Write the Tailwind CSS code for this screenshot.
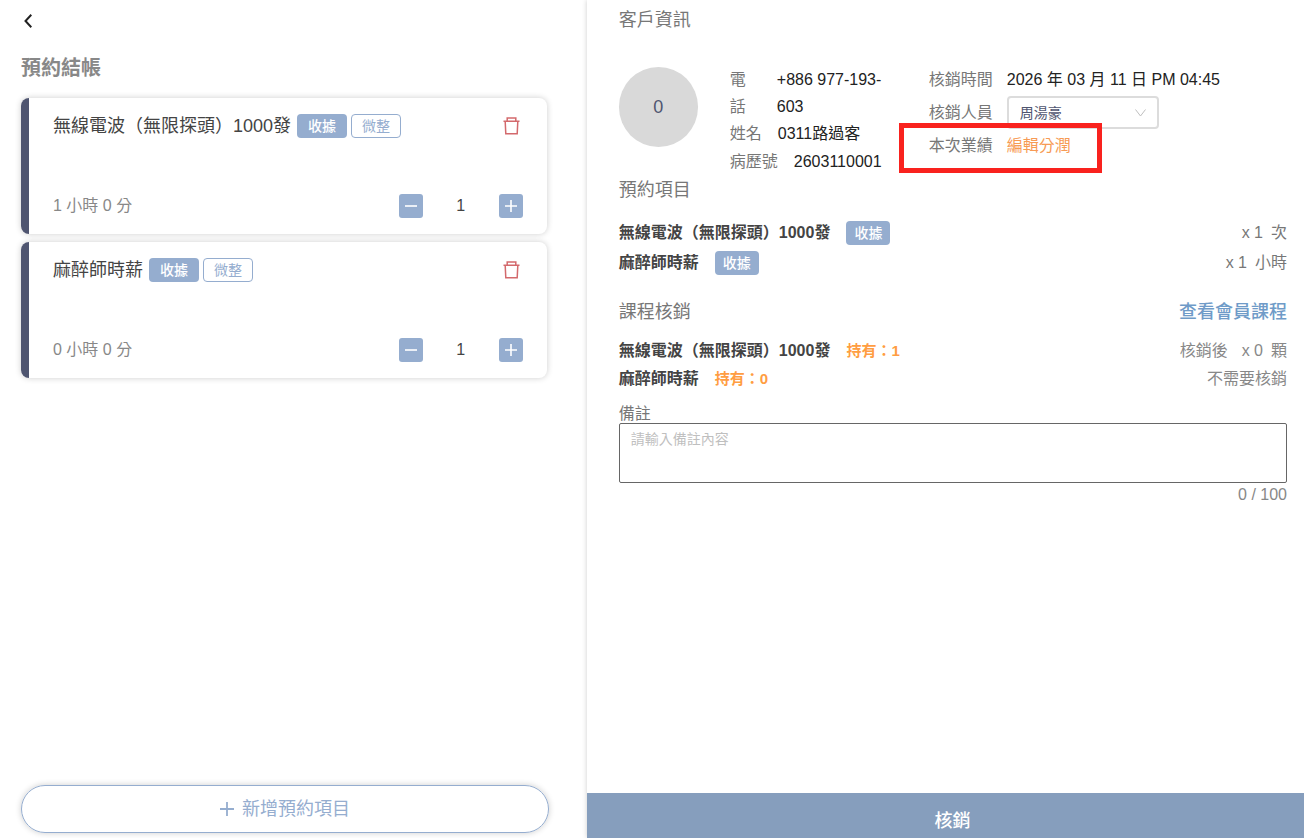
<!DOCTYPE html>
<html lang="zh-Hant">
<head>
<meta charset="utf-8">
<meta name="viewport" content="width=device-width, initial-scale=1">
<title>預約結帳</title>
<script src="https://cdn.jsdelivr.net/npm/@tailwindcss/browser@4"></script>
</head>
<body class="flex h-screen overflow-hidden bg-white font-['Liberation_Sans','Noto_Sans_CJK_TC',sans-serif] text-[#444]">
  <main class="flex w-[45%] shrink-0 flex-col pr-[38px] pl-[21px]">
    <header class="flex flex-col items-start pt-[9px]">
      <button type="button" aria-label="返回" class="flex h-6 items-center pl-[3px] text-[#222]">
        <svg width="8" height="14" viewBox="0 0 8 14" fill="none" stroke="currentColor" stroke-width="2"><path d="M7.3.8 1.5 7l5.8 6.2"/></svg>
      </button>
      <h1 class="mt-[21px] text-xl leading-7 font-bold text-[#888]">預約結帳</h1>
    </header>
    <ul class="mt-4 mr-[2px] flex grow flex-col gap-2">
      <li class="flex flex-col justify-between gap-14 rounded-lg border-l-8 border-[#4f5570] px-6 py-4 shadow-[0_0_6px_rgba(0,0,0,0.2)]">
        <div class="flex h-6 items-center gap-1">
          <h2 class="mr-[2px] text-lg leading-6">無線電波（無限探頭）1000發</h2>
          <span class="flex h-6 items-center rounded bg-[#95adcf] px-[11px] text-sm font-medium text-white">收據</span>
          <span class="flex h-6 items-center rounded border border-[#95adcf] px-[10px] text-sm text-[#95adcf]">微整</span>
          <button type="button" aria-label="刪除" class="ml-auto text-[#d3696c]">
            <svg width="24" height="24" viewBox="0 0 24 24" fill="none" stroke="currentColor" stroke-width="1.5"><path d="M4.5 7.2h16M8.2 7V4h8.6v3M6.2 7.5l.6 12.3h11.4l.6-12.3"/></svg>
          </button>
        </div>
        <div class="flex h-6 items-center">
          <p class="text-base leading-6 text-[#888]">1 小時 0 分</p>
          <button type="button" aria-label="減少" class="ml-auto flex size-6 items-center justify-center rounded-[3px] bg-[#95adcf] text-white"><svg width="12" height="12" viewBox="0 0 12 12" stroke="currentColor" stroke-width="1.6"><path d="M0 6h12"/></svg></button>
          <span class="w-[76px] text-center text-base leading-6">1</span>
          <button type="button" aria-label="增加" class="flex size-6 items-center justify-center rounded-[3px] bg-[#95adcf] text-white"><svg width="12" height="12" viewBox="0 0 12 12" stroke="currentColor" stroke-width="1.6"><path d="M0 6h12M6 0v12"/></svg></button>
        </div>
      </li>
      <li class="flex flex-col justify-between gap-14 rounded-lg border-l-8 border-[#4f5570] px-6 py-4 shadow-[0_0_6px_rgba(0,0,0,0.2)]">
        <div class="flex h-6 items-center gap-1">
          <h2 class="mr-[2px] text-lg leading-6">麻醉師時薪</h2>
          <span class="flex h-6 items-center rounded bg-[#95adcf] px-[11px] text-sm font-medium text-white">收據</span>
          <span class="flex h-6 items-center rounded border border-[#95adcf] px-[10px] text-sm text-[#95adcf]">微整</span>
          <button type="button" aria-label="刪除" class="ml-auto text-[#d3696c]">
            <svg width="24" height="24" viewBox="0 0 24 24" fill="none" stroke="currentColor" stroke-width="1.5"><path d="M4.5 7.2h16M8.2 7V4h8.6v3M6.2 7.5l.6 12.3h11.4l.6-12.3"/></svg>
          </button>
        </div>
        <div class="flex h-6 items-center">
          <p class="text-base leading-6 text-[#888]">0 小時 0 分</p>
          <button type="button" aria-label="減少" class="ml-auto flex size-6 items-center justify-center rounded-[3px] bg-[#95adcf] text-white"><svg width="12" height="12" viewBox="0 0 12 12" stroke="currentColor" stroke-width="1.6"><path d="M0 6h12"/></svg></button>
          <span class="w-[76px] text-center text-base leading-6">1</span>
          <button type="button" aria-label="增加" class="flex size-6 items-center justify-center rounded-[3px] bg-[#95adcf] text-white"><svg width="12" height="12" viewBox="0 0 12 12" stroke="currentColor" stroke-width="1.6"><path d="M0 6h12M6 0v12"/></svg></button>
        </div>
      </li>
    </ul>
    <button type="button" class="mb-[5px] flex h-12 items-center justify-center gap-2 rounded-full border border-[#95adcf] text-lg text-[#95adcf] shadow-[0_0_6px_rgba(0,0,0,0.2)]">
      <svg width="14" height="14" viewBox="0 0 14 14" stroke="currentColor" stroke-width="1.8"><path d="M0 7h14M7 0v14"/></svg>新增預約項目
    </button>
  </main>

  <aside class="flex min-w-0 grow flex-col text-base text-[#777] shadow-[0_0_5px_rgba(0,0,0,0.2)]">
    <div class="grow pt-[6px] pr-[17px] pl-8">
      <h2 class="text-lg leading-7">客戶資訊</h2>
      <div class="mt-8 flex gap-8">
        <div class="mt-px flex h-20 w-[79px] shrink-0 items-center justify-center rounded-full bg-[#d9d9d9] text-lg text-[#4f5570]">0</div>
        <dl class="w-[167px] shrink-0 leading-[27px]">
          <div class="flex gap-4"><dt class="w-[31px] shrink-0">電話</dt><dd class="min-w-0 text-[#222]">+886 977-193-603</dd></div>
          <div class="flex gap-4"><dt>姓名</dt><dd class="text-[#222]">0311路過客</dd></div>
          <div class="mt-px flex gap-4"><dt>病歷號</dt><dd class="text-[#222]">2603110001</dd></div>
        </dl>
        <div class="flex flex-col leading-[27px]">
          <div class="flex gap-[14px]"><span>核銷時間</span><span class="text-[#222]">2026 年 03 月 11 日 PM 04:45</span></div>
          <div class="mt-[3px] flex items-center gap-[14px]">
            <label for="staff">核銷人員</label>
            <div class="relative w-[152px] rounded border-2 border-[#dcdcdc]">
              <select id="staff" class="block h-[29px] w-full appearance-none bg-transparent px-[11px] text-sm text-[#4f5570]"><option>周湯豪</option></select>
              <svg class="pointer-events-none absolute top-[11px] right-[11px] text-[#bfbfbf]" width="11" height="8" viewBox="0 0 11 8" fill="none" stroke="currentColor"><path d="m.5.5 5 6.5 5-6.5"/></svg>
            </div>
          </div>
          <div class="relative mt-[3px] flex gap-[14px]">
            <span>本次業績</span><a href="#" class="text-[#f79b55]">編輯分潤</a>
            <span class="pointer-events-none absolute -top-[9px] -left-[30px] h-[50px] w-[203px] border-[5px] border-[#f9221e]"></span>
          </div>
        </div>
      </div>

      <h2 class="mt-px text-lg leading-7">預約項目</h2>
      <ul class="mt-[17px] flex flex-col gap-[6px] leading-6">
        <li class="flex items-center"><strong class="text-[#444]">無線電波（無限探頭）1000發</strong><span class="ml-4 flex h-6 items-center rounded bg-[#95adcf] px-2 text-sm font-medium text-white">收據</span><span class="ml-auto">x 1</span><span class="ml-2">次</span></li>
        <li class="flex items-center"><strong class="text-[#444]">麻醉師時薪</strong><span class="ml-4 flex h-6 items-center rounded bg-[#95adcf] px-2 text-sm font-medium text-white">收據</span><span class="ml-auto">x 1</span><span class="ml-2">小時</span></li>
      </ul>

      <div class="mt-[23px] flex justify-between text-lg leading-7">
        <h2>課程核銷</h2><a href="#" class="font-medium text-[#6f9bc8]">查看會員課程</a>
      </div>
      <ul class="mt-[11px] leading-7 text-[#888]">
        <li class="flex"><strong class="text-[#444]">無線電波（無限探頭）1000發</strong><strong class="ml-4 text-[15px] leading-7 text-[#ff9d42]">持有：1</strong><span class="ml-auto">核銷後</span><span class="ml-[14px]">x 0</span><span class="ml-2">顆</span></li>
        <li class="flex"><strong class="text-[#444]">麻醉師時薪</strong><strong class="ml-4 text-[15px] leading-7 text-[#ff9d42]">持有：0</strong><span class="ml-auto">不需要核銷</span></li>
      </ul>

      <label for="note" class="mt-3 block leading-[18px]">備註</label>
      <textarea id="note" maxlength="100" placeholder="請輸入備註內容" class="block h-[60px] w-full resize-none rounded-[2px] border border-[#666] px-[11px] py-1 text-sm leading-[22px] placeholder:text-[#bfbfbf]"></textarea>
      <p class="text-right leading-6 text-[#888]">0 / 100</p>
    </div>
    <button type="button" class="h-[45px] w-full bg-[#869ebd] pt-[10px] pl-[14px] text-lg font-medium text-white">核銷</button>
  </aside>
</body>
</html>
